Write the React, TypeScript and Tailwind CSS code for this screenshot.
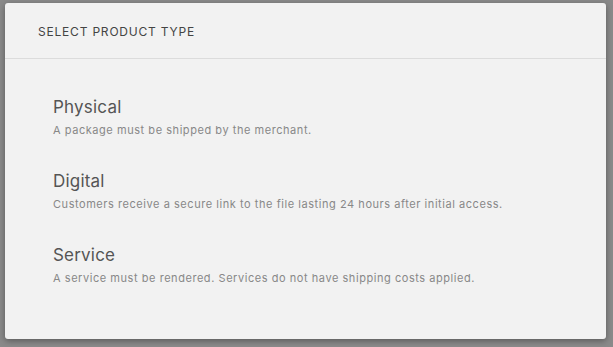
const types = [
  { name: "Physical", desc: "A package must be shipped by the merchant." },
  { name: "Digital", desc: "Customers receive a secure link to the file lasting 24 hours after initial access." },
  { name: "Service", desc: "A service must be rendered. Services do not have shipping costs applied." },
]

export default function App() {
  return (
    <div className="h-[347px] w-[613px] bg-[#8a8a8a] pl-[5px] pt-[3px] font-['Inter','Liberation_Sans',sans-serif]">
      <div className="h-[336px] w-[601px] rounded-[3px] bg-[#f2f2f2] shadow-[0_2px_6px_rgba(0,0,0,0.35)]">
        <div className="flex h-[56px] items-center border-b border-[#dcdcdc] px-[33px] pt-[3px]">
          <h2 className="text-[12px] tracking-[0.8px] text-[#444]">SELECT PRODUCT TYPE</h2>
        </div>
        <div className="flex flex-col gap-[30px] px-[48px] pt-[37px]">
          {types.map((t) => (
            <button key={t.name} className="flex flex-col items-start text-left">
              <span className="text-[17px] leading-[22px] tracking-[0.2px] text-[#555]">{t.name}</span>
              <span className="mt-[2px] text-[11px] leading-[20px] tracking-[0.55px] text-[#888]">{t.desc}</span>
            </button>
          ))}
        </div>
      </div>
    </div>
  )
}
